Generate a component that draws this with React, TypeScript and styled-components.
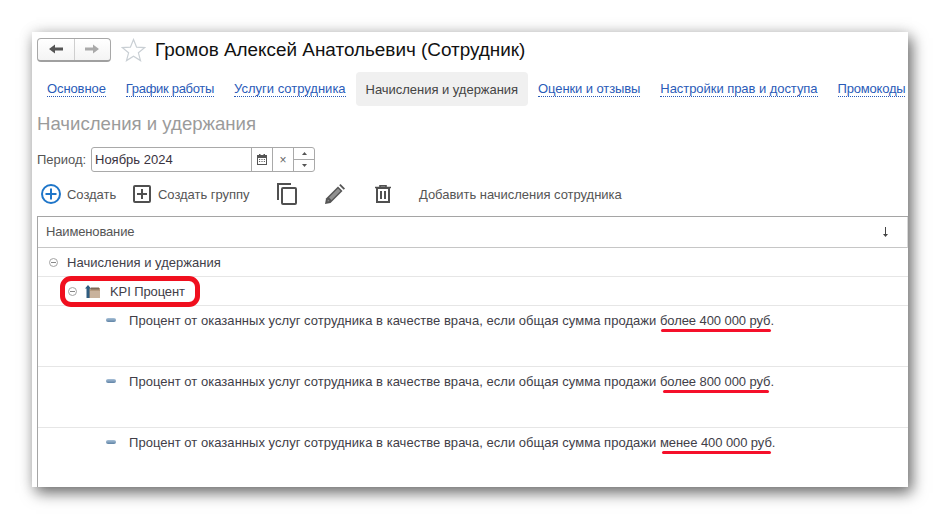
import React from "react";
import styled, { createGlobalStyle } from "styled-components";

const Global = createGlobalStyle`
  html, body { margin: 0; padding: 0; background: #fff; }
  body { font-family: "Liberation Sans", Arial, sans-serif; font-size: 13px; color: #4b4b4b; }
`;
const Stage = styled.div`
  width: 940px; height: 519px; padding: 32px; box-sizing: border-box; overflow: hidden; background: #fff;
`;
const Panel = styled.div`
  width: 876px; height: 455px; background: #fff; box-sizing: border-box; padding: 5px 0 0 5px;
  box-shadow: 4px 6px 14px rgba(0,0,0,.55), 0 0 14px rgba(0,0,0,.12);
  display: flex; flex-direction: column; overflow: hidden;
  & > * { flex-shrink: 0; }
`;
const TitleRow = styled.div`display: flex; align-items: center; height: 25px;`;
const NavGroup = styled.div`
  display: flex; width: 74px; height: 24px; box-sizing: border-box; border: 1px solid #a8a8a8; border-bottom: 2px solid #a0a0a0; border-radius: 4px;
  background: linear-gradient(#fff, #f4f4f4);
`;
const NavBtn = styled.div<{ $last?: boolean }>`
  flex: 1; display: flex; align-items: center; justify-content: center;
  border-left: ${p => (p.$last ? "1px solid #cfcfcf" : "none")};
`;
const Title = styled.div`font-size: 18.9px; color: #111; margin-left: 9px; white-space: nowrap;`;
const Tabs = styled.div`display: flex; align-items: center; margin-top: 10px; height: 34px; white-space: nowrap;`;
const Tab = styled.div<{ $active?: boolean; $ls?: number }>`
  height: 34px; padding: 0 10px; display: flex; align-items: center; box-sizing: border-box; border-radius: 4px;
  background: ${p => (p.$active ? "#f0f0f0" : "transparent")};
  letter-spacing: ${p => p.$ls ?? 0}px;
`;
const TabLink = styled.span`color: #2a5bb8; border-bottom: 1px dotted #2a5bb8; line-height: 14px;`;
const TabText = styled.span`color: #444;`;
const Heading = styled.div`font-size: 18.6px; color: #9b9b9b; margin-top: 7px; height: 22px; line-height: 22px;`;
const PeriodRow = styled.div`display: flex; align-items: center; margin-top: 12px; height: 25px;`;
const PeriodLabel = styled.span`width: 54px; color: #555;`;
const Field = styled.div`
  display: flex; width: 224px; height: 25px; box-sizing: border-box; border: 1px solid #a9a9a9; border-radius: 3px;
`;
const FieldInput = styled.div`flex: 1; padding-left: 3px; line-height: 23px; color: #3a3340;`;
const FieldBtn = styled.div`
  width: 21px; box-sizing: border-box; border-left: 1px solid #a9a9a9; display: flex; align-items: center; justify-content: center; color: #666; font-size: 12px;
`;
const Spin = styled.div`width: 21px; box-sizing: border-box; border-left: 1px solid #a9a9a9; display: flex; flex-direction: column;`;
const SpinPart = styled.div<{ $top?: boolean }>`
  flex: 1; display: flex; align-items: center; justify-content: center; border-bottom: ${p => (p.$top ? "1px solid #a9a9a9" : "none")};
`;
const Toolbar = styled.div`display: flex; align-items: center; height: 24px; margin-top: 10px;`;
const ToolItem = styled.div<{ $w: number; $pad?: number; $gap?: number }>`
  display: flex; align-items: center; width: ${p => p.$w}px; padding-left: ${p => p.$pad ?? 0}px; box-sizing: border-box; flex: none; gap: ${p => p.$gap ?? 6}px; color: #555; white-space: nowrap; letter-spacing: -.03px;
`;
const Table = styled.div`
  margin-top: 10px; border-top: 1px solid #a5a5a5; border-left: 1px solid #a5a5a5; display: flex; flex-direction: column;
`;
const HeaderRow = styled.div`
  height: 30px; box-sizing: content-box; border-bottom: 1px solid #c6c6c6; border-right: 1px solid #d8d8d8; display: flex; align-items: center; justify-content: space-between;
  padding: 0 18px 0 8px; color: #555; flex: none; letter-spacing: -.15px;
`;
const HeaderLabel = styled.span`margin-top: -2px;`;
const Row = styled.div<{ $h: number; $indent: number }>`
  height: ${p => p.$h}px; flex: none; box-sizing: border-box; border-bottom: 1px solid #e6e6e6; padding: 7px 0 0 ${p => p.$indent}px;
  display: flex; align-items: flex-start; line-height: 15px; color: #413e48; white-space: nowrap;
`;
const RowText = styled.span`display: block; letter-spacing: .035px;`;
const Collapse = styled.span<{ $gap: number }>`
  width: 7px; height: 7px; border: 1px solid #a3a3a3; border-radius: 50%; margin: 3px ${p => p.$gap}px 0 0; position: relative; flex: none;
  &::after { content: ""; position: absolute; left: 1px; right: 1px; top: 3px; height: 1px; background: #888; }
`;
const Dash = styled.span`
  width: 10px; height: 4px; border-radius: 2px; margin: 5px 13px 0 0; flex: none;
  background: linear-gradient(#a9c1d8, #5f83a6);
`;
const Highlight = styled.span`
  position: relative; letter-spacing: -.1px;
  &::after {
    content: ""; position: absolute; left: -50px; top: -8px; width: 140px; height: 31px; box-sizing: border-box;
    border: 5px solid #f00f1e; border-radius: 11px;
  }
`;
const Mark = styled.span<{ $l: number; $w: number }>`
  position: relative; letter-spacing: -.08px;
  &::after {
    content: ""; position: absolute; left: ${p => p.$l}px; width: ${p => p.$w}px; top: 16px; height: 3px; border-radius: 2px; background: #f5102a;
  }
`;

const Back = ({ c }: { c: string }) => (
  <svg width="16" height="12" viewBox="0 0 16 12"><path d="M1 6 L7 1.5 V4.5 H15 V7.5 H7 V10.5 Z" fill={c} /></svg>
);
const Fwd = ({ c }: { c: string }) => (
  <svg width="16" height="12" viewBox="0 0 16 12"><path d="M15 6 L9 1.5 V4.5 H1 V7.5 H9 V10.5 Z" fill={c} /></svg>
);
const Star = () => (
  <svg width="25" height="24" viewBox="0 0 25 24" style={{ marginLeft: 10 }}>
    <path d="M12.5 1.5 L15.6 9.2 L23.6 9.6 L17.4 14.8 L19.5 22.6 L12.5 18.2 L5.5 22.6 L7.6 14.8 L1.4 9.6 L9.4 9.2 Z" fill="#fff" stroke="#c9cfd4" strokeWidth="1.2" />
  </svg>
);
const Calendar = () => (
  <svg width="10" height="11" viewBox="0 0 10 11">
    <rect x=".5" y="1.5" width="9" height="9" fill="#fff" stroke="#555" />
    <rect x="0" y="1" width="10" height="3" fill="#555" />
    <rect x="2" y="0" width="1.5" height="2" fill="#555" /><rect x="6.5" y="0" width="1.5" height="2" fill="#555" />
    <path d="M2 5.5h1.2M4.4 5.5h1.2M6.8 5.5h1.2M2 7.5h1.2M4.4 7.5h1.2M6.8 7.5h1.2" stroke="#666" />
  </svg>
);
const PlusCircle = () => (
  <svg width="20" height="20" viewBox="0 0 20 20">
    <circle cx="10" cy="10" r="9" fill="#fff" stroke="#1f76c9" strokeWidth="2" />
    <path d="M10 4.5v11M4.5 10h11" stroke="#1f76c9" strokeWidth="2" />
  </svg>
);
const PlusSquare = () => (
  <svg width="18" height="18" viewBox="0 0 18 18">
    <rect x="1" y="1" width="16" height="16" rx="1" fill="#fff" stroke="#505050" strokeWidth="2" />
    <path d="M9 4v10M4 9h10" stroke="#505050" strokeWidth="2" />
  </svg>
);
const Copy = () => (
  <svg width="20" height="22" viewBox="0 0 20 22">
    <path d="M1 17V1h13" fill="none" stroke="#505050" strokeWidth="2" />
    <rect x="5" y="5" width="14" height="16" rx="1" fill="#fff" stroke="#505050" strokeWidth="2" />
  </svg>
);
const Pencil = () => (
  <svg width="20" height="20" viewBox="0 0 20 20">
    <path d="M0 20 L1 14.5 L13 2.5 L17.5 7 L5.5 19 Z" fill="#555" />
    <path d="M2.5 17.5 L2.9 15.4 L4.6 17.1 Z M4 13.5 L13 4.5 L15.5 7 L6.5 16 Z" fill="#fff" opacity=".35" />
    <path d="M14.2 1.3 L15.5 0 L20 4.5 L18.7 5.8 Z" fill="#555" />
  </svg>
);
const Trash = () => (
  <svg width="16" height="18" viewBox="0 0 16 18">
    <path d="M0 2.5h16M5 2.5V.7h6v1.8" fill="none" stroke="#505050" strokeWidth="1.6" />
    <rect x="2" y="3" width="12" height="14" fill="#fff" stroke="#505050" strokeWidth="2" />
    <path d="M6 6v8M10 6v8" stroke="#505050" strokeWidth="2" />
  </svg>
);
const Folder = () => (
  <svg width="15" height="14" viewBox="0 0 15 14" style={{ marginRight: 10, flex: "none" }}>
    <path d="M4 4h11v10H4z" fill="#b49a80" />
    <path d="M6 3.5h8v2H6z" fill="#7d6a58" />
    <path d="M5 7h10v7H5z" fill="#c9b29c" />
    <path d="M0 4.5 L3 1 L6 4.5 H4.5 V14 H1.5 V4.5 Z" fill="#2f5d80" />
  </svg>
);
const SortArrow = () => (
  <svg width="7" height="10" viewBox="0 0 7 10"><path d="M3.5 0v8" stroke="#444" /><path d="M1 7h5L3.5 10z" fill="#444" /></svg>
);
const Tiny = ({ up }: { up?: boolean }) => (
  <svg width="5" height="3" viewBox="0 0 5 3"><path d={up ? "M2.5 0 L5 3 H0Z" : "M0 0H5L2.5 3Z"} fill="#555" /></svg>
);

const PREFIX = "Процент от оказанных услуг сотрудника в качестве врача, если общая сумма продажи ";

export default function App() {
  return (
    <Stage>
      <Global />
      <Panel>
        <TitleRow>
          <NavGroup>
            <NavBtn><Back c="#555" /></NavBtn>
            <NavBtn $last><Fwd c="#aaa" /></NavBtn>
          </NavGroup>
          <Star />
          <Title>Громов Алексей Анатольевич (Сотрудник)</Title>
        </TitleRow>
        <Tabs>
          <Tab $ls={-0.1}><TabLink>Основное</TabLink></Tab>
          <Tab $ls={-0.3}><TabLink>График работы</TabLink></Tab>
          <Tab><TabLink>Услуги сотрудника</TabLink></Tab>
          <Tab $active $ls={-0.03}><TabText>Начисления и удержания</TabText></Tab>
          <Tab $ls={-0.1}><TabLink>Оценки и отзывы</TabLink></Tab>
          <Tab $ls={-0.05}><TabLink>Настройки прав и доступа</TabLink></Tab>
          <Tab $ls={-0.2}><TabLink>Промокоды</TabLink></Tab>
        </Tabs>
        <Heading>Начисления и удержания</Heading>
        <PeriodRow>
          <PeriodLabel>Период:</PeriodLabel>
          <Field>
            <FieldInput>Ноябрь 2024</FieldInput>
            <FieldBtn><Calendar /></FieldBtn>
            <FieldBtn>×</FieldBtn>
            <Spin>
              <SpinPart $top><Tiny up /></SpinPart>
              <SpinPart><Tiny /></SpinPart>
            </Spin>
          </Field>
        </PeriodRow>
        <Toolbar>
          <ToolItem $w={96} $pad={4}><PlusCircle />Создать</ToolItem>
          <ToolItem $w={144} $gap={7}><PlusSquare /><span>Создать группу</span></ToolItem>
          <ToolItem $w={48}><Copy /></ToolItem>
          <ToolItem $w={50}><Pencil /></ToolItem>
          <ToolItem $w={44}><Trash /></ToolItem>
          <ToolItem $w={220}>Добавить начисления сотрудника</ToolItem>
        </Toolbar>
        <Table>
          <HeaderRow><HeaderLabel>Наименование</HeaderLabel><SortArrow /></HeaderRow>
          <Row $h={29} $indent={11}><Collapse $gap={9} /><RowText>Начисления и удержания</RowText></Row>
          <Row $h={29} $indent={30}>
            <Collapse $gap={8} /><Folder />
            <RowText><Highlight>KPI Процент</Highlight></RowText>
          </Row>
          <Row $h={61} $indent={68}><Dash /><RowText>{PREFIX}<Mark $l={1} $w={110}>более 400 000 руб.</Mark></RowText></Row>
          <Row $h={61} $indent={68}><Dash /><RowText>{PREFIX}<Mark $l={3} $w={106}>более 800 000 руб.</Mark></RowText></Row>
          <Row $h={61} $indent={68}><Dash /><RowText>{PREFIX}<Mark $l={2} $w={109}>менее 400 000 руб.</Mark></RowText></Row>
        </Table>
      </Panel>
    </Stage>
  );
}
